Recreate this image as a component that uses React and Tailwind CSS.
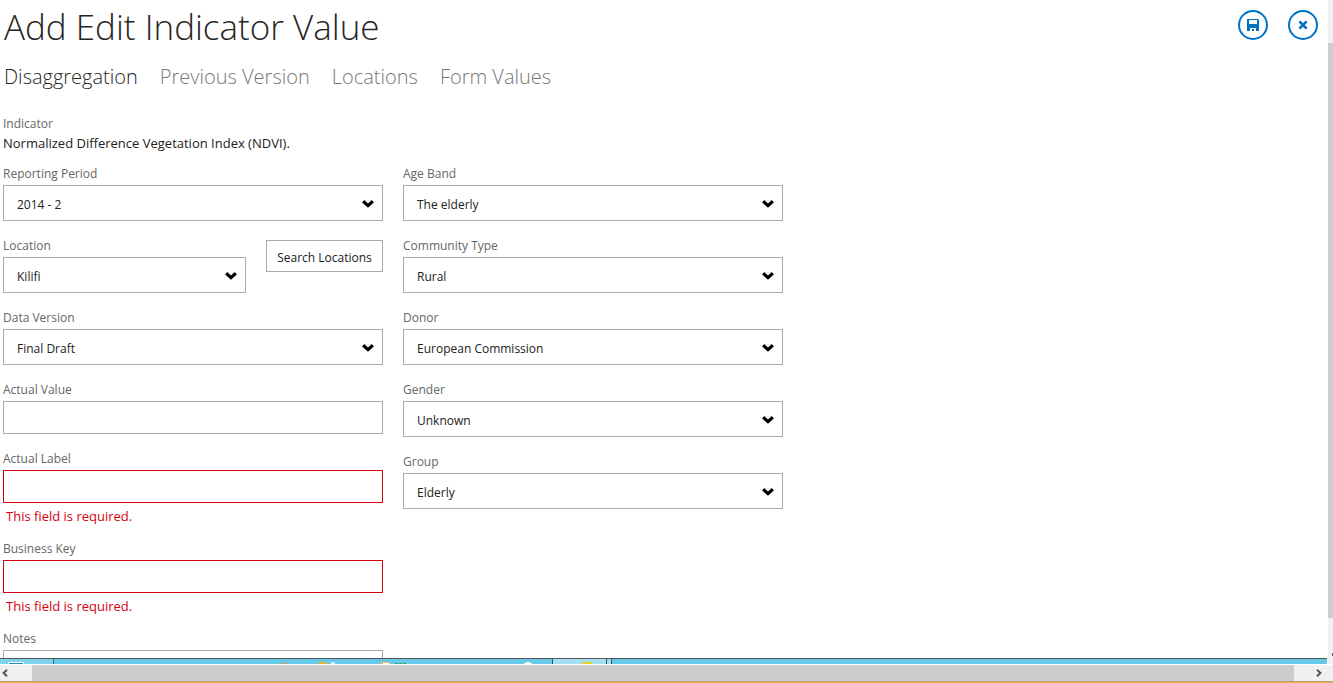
import React, { useState } from "react";

const choices = {
  period: ["2014 - 2", "2014 - 1"],
  location: ["Kilifi"],
  version: ["Final Draft"],
  age: ["The elderly"],
  community: ["Rural"],
  donor: ["European Commission"],
  gender: ["Unknown", "Female", "Male"],
  group: ["Elderly"],
};

function Label({ id, children }) {
  return (
    <label htmlFor={id} className="mb-0.5 block text-xs leading-[18px] text-[#666]">
      {children}
    </label>
  );
}

function SelectField({ id, label }) {
  return (
    <div className="min-w-0 flex-1">
      <Label id={id}>{label}</Label>
      <div className="grid items-center">
        <select
          id={id}
          className="col-start-1 row-start-1 h-9 w-full appearance-none rounded-none border border-[#ababab] bg-white px-[13px] pt-[3px] text-xs text-[#212121]"
        >
          {choices[id].map((c) => (
            <option key={c}>{c}</option>
          ))}
        </select>
        <svg
          viewBox="0 0 12 8"
          className="pointer-events-none col-start-1 row-start-1 mt-0.5 mr-[9px] h-2 w-3 justify-self-end"
          fill="none"
          stroke="#000"
          strokeWidth="3.2"
          aria-hidden="true"
        >
          <path d="M1.2 1.2 6 5.6 10.8 1.2" />
        </svg>
      </div>
    </div>
  );
}

function TextField({ id, label, error }) {
  return (
    <div>
      <Label id={id}>{label}</Label>
      <input
        id={id}
        type="text"
        aria-invalid={!!error}
        className={
          error
            ? "block h-[33px] w-full border border-[#d6000f] bg-white px-3 text-xs"
            : "block h-[33px] w-full border border-[#ababab] bg-white px-3 text-xs"
        }
      />
      {error && <p className="mt-1 h-[17px] pl-[3px] text-[13px] leading-[19px] text-[#d6000f]">{error}</p>}
    </div>
  );
}

const tabs = ["Disaggregation", "Previous Version", "Locations", "Form Values"];

export default function App() {
  const [tab, setTab] = useState(tabs[0]);
  return (
    <div className="flex h-screen flex-col overflow-hidden bg-white font-['Open_Sans','Noto_Sans',sans-serif] text-[#212121]">
      <div className="flex min-h-0 flex-1">
        <div className="flex min-w-0 flex-1 flex-col">
          <main className="min-h-0 flex-1 overflow-hidden pl-[3px]">
            <header className="flex items-start justify-between pr-[10px]">
              <h1 className="pt-1 pl-px text-[35px] font-[350] leading-[46px] text-[#262626]">Add Edit Indicator Value</h1>
              <div className="flex gap-5 pt-[10px]">
                <button aria-label="Save" className="grid size-[30px] place-items-center rounded-full border-2 border-[#0072c6]">
                  <svg viewBox="0 0 12 12" className="size-3" fill="#0072c6" aria-hidden="true">
                    <path fillRule="evenodd" d="M0 0H11L12 1V12H9V9H3V12H0ZM2 1V5H10V1ZM5 10H7V12H5Z" />
                  </svg>
                </button>
                <button aria-label="Close" className="grid size-[30px] place-items-center rounded-full border-2 border-[#0072c6]">
                  <svg viewBox="0 0 10 10" className="size-[10px]" stroke="#0072c6" strokeWidth="2.6" aria-hidden="true">
                    <path d="M1.4 1.4 8.6 8.6M8.6 1.4 1.4 8.6" />
                  </svg>
                </button>
              </div>
            </header>
            <nav className="mt-3 flex gap-[22px] pl-px text-[20px] font-light leading-[30px]">
              {tabs.map((t) => (
                <button key={t} onClick={() => setTab(t)} className={t === tab ? "text-[#262626]" : "text-[#777]"}>
                  {t}
                </button>
              ))}
            </nav>
            <section className="pt-6">
              <p className="text-xs leading-4 text-[#666]">Indicator</p>
              <p className="text-[13px] leading-[22px]">Normalized Difference Vegetation Index (NDVI).</p>
            </section>
            <form className="grid max-w-[780px] grid-cols-2 gap-x-5 pt-[11px]" onSubmit={(e) => e.preventDefault()}>
              <div className="flex flex-col gap-4">
                <SelectField id="period" label="Reporting Period" />
                <div className="flex items-start gap-5">
                  <SelectField id="location" label="Location" />
                  <button type="button" className="mt-[3px] h-8 w-[117px] whitespace-nowrap border border-[#ababab] pt-1 text-xs">
                    Search Locations
                  </button>
                </div>
                <SelectField id="version" label="Data Version" />
                <TextField id="value" label="Actual Value" />
                <TextField id="label" label="Actual Label" error="This field is required." />
                <TextField id="key" label="Business Key" error="This field is required." />
                <div>
                  <Label id="notes">Notes</Label>
                  <textarea id="notes" className="block h-20 w-full resize-none border border-[#ababab] px-3 text-xs" />
                </div>
              </div>
              <div className="flex flex-col gap-4 self-start">
                <SelectField id="age" label="Age Band" />
                <SelectField id="community" label="Community Type" />
                <SelectField id="donor" label="Donor" />
                <SelectField id="gender" label="Gender" />
                <SelectField id="group" label="Group" />
              </div>
            </form>
          </main>
          <div className="mr-px flex h-[6px] shrink-0 border-t border-[#555] bg-[#67c9e9]">
            <div className="w-[54px] border-r border-[#2f6f86] bg-[#7dd1ec] pt-[3px]">
              <div className="ml-2 h-[2px] w-4 border-x border-t border-white bg-[#1f86d0]" />
            </div>
            <div className="flex w-[498px] justify-end pt-[3px]">
              <svg viewBox="0 0 272 2" className="h-[2px] w-[272px]" aria-hidden="true">
                <path fill="#c9a27c" d="M0 1H8V2H0Z" />
                <path fill="#e5b93c" d="M39 0H47V2H39Z" />
                <path fill="#d7efff" d="M51 0H55V2H51Z" />
                <path fill="#f0b565" d="M101 0H110V2H101Z" />
                <path fill="#fff" d="M103 1H109V2H103ZM246 0H250V1H252V2H244V1H246Z" />
                <path fill="#3a9b72" d="M115 1H118V2H115ZM119 1H122V2H119ZM123 1H126V2H123Z" />
              </svg>
            </div>
            <div className="flex w-[55px] justify-center border-x border-[#2b5566] bg-[#a3dff1] pl-[14px] pt-[3px]">
              <div className="h-[2px] w-[10px] bg-[#e9d02c]" />
            </div>
            <div className="w-[5px] border-r border-[#2b5566] bg-[#a3dff1]" />
          </div>
        </div>
        <div className="flex w-[5px] shrink-0 flex-col bg-[#f0f0f0] pt-[43px]" aria-hidden="true">
          <div className="h-[575px] bg-[#cdcdcd]" />
          <div className="mt-[35px] h-[3px] w-px self-end bg-[#555]" />
        </div>
      </div>
      <div className="flex h-[17px] shrink-0 items-center border-t border-white bg-[#f0f0f0]" aria-hidden="true">
        <div className="flex w-8 pl-[2px]">
          <svg viewBox="0 0 6 8" className="h-2 w-[6px]" fill="none" stroke="#555" strokeWidth="2">
            <path d="M5 .8 1.6 4 5 7.2" />
          </svg>
        </div>
        <div className="h-full flex-1 bg-[#cdcdcd]" />
        <div className="flex w-[39px] justify-end pr-[11px]">
          <svg viewBox="0 0 6 8" className="h-2 w-[6px]" fill="none" stroke="#555" strokeWidth="2">
            <path d="M1 .8 4.4 4 1 7.2" />
          </svg>
        </div>
      </div>
      <div className="h-[2px] shrink-0 border-t border-[#b99b78] bg-[#f0ad4e]" />
    </div>
  );
}
